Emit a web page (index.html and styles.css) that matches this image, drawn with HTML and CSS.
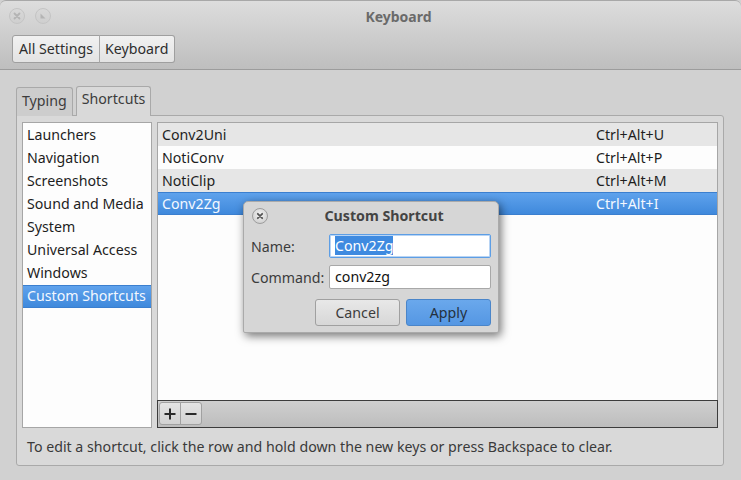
FILE: index.html
```html
<!DOCTYPE html>
<html>
<head>
<meta charset="utf-8">
<link rel="stylesheet" href="styles.css">
</head>
<body>
<div class="window">
  <div class="titlebar">
    <div class="wm-row">
      <div class="wm-buttons">
        <span class="wm-btn"><svg width="10" height="10" viewBox="0 0 10 10"><path d="M2.5 2.5 L7.5 7.5 M7.5 2.5 L2.5 7.5" stroke="#b4b4b4" stroke-width="1.8" stroke-linecap="round"/></svg></span>
        <span class="wm-btn"><svg width="10" height="10" viewBox="0 0 10 10"><path d="M2.5 2.5 L2.5 7.5 L7.5 7.5 Z" fill="#b4b4b4"/></svg></span>
      </div>
      <div class="wm-title">Keyboard</div>
    </div>
    <div class="crumbs">
      <span class="crumb">All Settings</span><span class="crumb">Keyboard</span>
    </div>
  </div>
  <div class="content">
    <div class="tabs">
      <span class="tab">Typing</span>
      <span class="tab active">Shortcuts</span>
    </div>
    <div class="page">
      <div class="lists">
        <ul class="cats">
          <li>Launchers</li>
          <li>Navigation</li>
          <li>Screenshots</li>
          <li>Sound and Media</li>
          <li>System</li>
          <li>Universal Access</li>
          <li>Windows</li>
          <li class="sel">Custom Shortcuts</li>
        </ul>
        <div class="shortcuts">
          <div class="rows">
            <div class="row odd"><span class="name">Conv2Uni</span><span class="key">Ctrl+Alt+U</span></div>
            <div class="row"><span class="name">NotiConv</span><span class="key">Ctrl+Alt+P</span></div>
            <div class="row odd"><span class="name">NotiClip</span><span class="key">Ctrl+Alt+M</span></div>
            <div class="row sel"><span class="name">Conv2Zg</span><span class="key">Ctrl+Alt+I</span></div>
          </div>
          <div class="toolbar">
            <div class="tb-group">
              <span class="tb-btn"><svg width="14" height="14" viewBox="0 0 14 14"><path d="M7 1.5 V12.5 M1.5 7 H12.5" stroke="#2b2b2b" stroke-width="2"/></svg></span>
              <span class="tb-btn"><svg width="14" height="14" viewBox="0 0 14 14"><path d="M1.5 7 H12.5" stroke="#2b2b2b" stroke-width="2"/></svg></span>
            </div>
          </div>
        </div>
      </div>
      <p class="hint">To edit a shortcut, click the row and hold down the new keys or press Backspace to clear.</p>
    </div>
  </div>

  <div class="dialog">
    <div class="dlg-head">
      <span class="dlg-close"><svg width="10" height="10" viewBox="0 0 10 10"><path d="M2.8 2.8 L7.2 7.2 M7.2 2.8 L2.8 7.2" stroke="#555" stroke-width="1.8" stroke-linecap="round"/></svg></span>
      <span class="dlg-title">Custom Shortcut</span>
    </div>
    <div class="form">
      <label class="lbl">Name:</label>
      <div class="entry focus"><span class="seltext">Conv2Zg</span></div>
      <label class="lbl">Command:</label>
      <div class="entry">conv2zg</div>
    </div>
    <div class="dlg-buttons">
      <span class="btn">Cancel</span>
      <span class="btn primary">Apply</span>
    </div>
  </div>
</div>
</body>
</html>
```

FILE: styles.css
```css
* { box-sizing: border-box; }
html, body { margin: 0; padding: 0; }
body {
  width: 741px;
  height: 480px;
  overflow: hidden;
  font-family: "Noto Sans", "DejaVu Sans", sans-serif;
  font-size: 14.2px;
  color: #3c3c3c;
  background: #d0d0d0;
}
.window {
  position: relative;
  width: 741px;
  height: 480px;
  background: #d1d1d1;
  display: flex;
  flex-direction: column;
}
.titlebar {
  height: 70px;
  background: linear-gradient(#dddddd, #bebebe);
  border-bottom: 1px solid #9c9c9c;
  border-top: 1px solid #a8a8a8;
  border-radius: 6px 6px 0 0;
  display: flex;
  flex-direction: column;
}
.wm-row {
  height: 33px;
  position: relative;
  display: flex;
  align-items: center;
  justify-content: center;
}
.wm-buttons {
  position: absolute;
  left: 9px;
  top: 7px;
  display: flex;
  gap: 10px;
}
.wm-btn {
  width: 16px;
  height: 16px;
  border-radius: 50%;
  border: 1px solid #c4c4c4;
  background: linear-gradient(#d8d8d8, #cfcfcf);
  display: flex;
  align-items: center;
  justify-content: center;
}
.wm-title {
  font-weight: bold;
  color: #6a6a6a;
  font-size: 14px;
  margin-left: 56px;
  margin-top: -3px;
}
.crumbs {
  display: flex;
  margin-left: 12px;
  margin-top: 1px;
}
.crumb {
  height: 28px;
  line-height: 25px;
  padding: 0 6px;
  border: 1px solid #9f9f9f;
  background: linear-gradient(#f1f1f1, #e3e3e3);
  color: #2e2e2e;
}
.crumb:first-child { border-radius: 3px 0 0 3px; }
.crumb + .crumb { border-left: 1px solid #a8a8a8; margin-left: -1px; border-radius: 0 3px 3px 0; padding: 0 6px 0 5px; }
.content {
  flex: 1;
  padding: 16px 17px 14px 16px;
  display: flex;
  flex-direction: column;
}
.tabs {
  display: flex;
  align-items: flex-end;
  gap: 3px;
  height: 30px;
  position: relative;
  z-index: 1;
  margin-bottom: -1px;
}
.tab {
  height: 29px;
  padding: 3px 5px 0 5px;
  border: 1px solid #a9a9a9;
  border-bottom: none;
  border-radius: 3px 3px 0 0;
  background: #cdcdcd;
  color: #3c3c3c;
}
.tab.active {
  height: 30px;
  padding-top: 2px;
  background: #d9d9d9;
}
.page {
  flex: 1;
  background: #d9d9d9;
  border: 1px solid #a9a9a9;
  border-radius: 0 3px 3px 3px;
  padding: 6px 5px 0 5px;
  display: flex;
  flex-direction: column;
}
.lists {
  display: flex;
  gap: 5px;
  height: 306px;
}
.cats {
  list-style: none;
  margin: 0;
  padding: 1px 0 0 0;
  width: 130px;
  background: #fdfdfd;
  border: 1px solid #a6a6a6;
  color: #1e1e1e;
}
.cats li {
  height: 23px;
  line-height: 22px;
  padding-left: 4px;
}
.cats li.sel {
  margin-top: 0;
  background: linear-gradient(#5fa2ec, #3f89dc);
  border-top: 1px solid #3b7fcf;
  border-bottom: 1px solid #3b7fcf;
  color: #f4f8ff;
  line-height: 20px;
}
.shortcuts {
  flex: 1;
  display: flex;
  flex-direction: column;
}
.rows {
  flex: 1;
  background: #fdfdfd;
  border: 1px solid #a6a6a6;
  border-bottom: none;
  color: #1e1e1e;
}
.row {
  height: 23px;
  display: flex;
  align-items: center;
  padding-left: 4px;
}
.row.odd { background: #e6e6e6; }
.row.sel {
  background: linear-gradient(#5fa2ec, #3f89dc);
  border-top: 1px solid #3b7fcf;
  border-bottom: 1px solid #3b7fcf;
  color: #f4f8ff;
}
.row .name { width: 434px; }
.toolbar {
  height: 28px;
  border: 1px solid #3c3c3c;
  background: linear-gradient(#cfcfcf, #bdbdbd);
  padding: 1px 0 0 1px;
  display: flex;
}
.tb-group { display: flex; }
.tb-btn {
  width: 22px;
  height: 23px;
  border: 1px solid #a1a1a1;
  background: linear-gradient(#e4e4e4, #d2d2d2);
  display: flex;
  align-items: center;
  justify-content: center;
}
.tb-btn:first-child { border-radius: 3px 0 0 3px; }
.tb-btn + .tb-btn { margin-left: -1px; border-radius: 0 3px 3px 0; }
.hint {
  margin: 9px 0 0 5px;
  color: #3a3a3a;
}
.dialog {
  position: absolute;
  left: 243px;
  top: 201px;
  width: 256px;
  height: 132px;
  background: #d6d6d6;
  border: 1px solid #aaaaaa;
  border-radius: 5px 5px 2px 2px;
  box-shadow: 2px 3px 10px rgba(0,0,0,0.55);
  display: flex;
  flex-direction: column;
}
.dlg-head {
  height: 28px;
  position: relative;
  display: flex;
  align-items: center;
  justify-content: center;
}
.dlg-close {
  position: absolute;
  left: 8px;
  top: 6px;
  width: 16px;
  height: 16px;
  border-radius: 50%;
  border: 1px solid #9d9d9d;
  background: radial-gradient(circle at 50% 40%, #f3f3f3, #c7c7c7);
  display: flex;
  align-items: center;
  justify-content: center;
}
.dlg-title {
  font-weight: bold;
  color: #444;
  margin-left: 26px;
  margin-top: -1px;
}
.form {
  display: grid;
  grid-template-columns: 78px 162px;
  row-gap: 7px;
  padding: 4px 0 0 7px;
  align-items: center;
}
.lbl { color: #3c3c3c; }
.entry {
  height: 24px;
  background: #ffffff;
  border: 1px solid #a8a8a8;
  border-radius: 2px;
  padding: 0 5px;
  line-height: 21px;
  color: #111;
}
.entry.focus { border-color: #5d9ee5; box-shadow: inset 0 0 0 1px #b8d4f4; }
.seltext { background: #3e8ae0; color: #fff; }
.dlg-buttons {
  display: flex;
  justify-content: flex-end;
  gap: 6px;
  padding: 10px 7px 0 0;
}
.btn {
  width: 85px;
  height: 27px;
  border: 1px solid #a0a0a0;
  border-radius: 3px;
  background: linear-gradient(#e8e8e8, #d7d7d7);
  display: flex;
  align-items: center;
  justify-content: center;
  padding-bottom: 1px;
  color: #3c3c3c;
}
.btn.primary {
  background: linear-gradient(#6aa8ec, #5597e3);
  border-color: #4a85c9;
  color: #24313f;
}
```
